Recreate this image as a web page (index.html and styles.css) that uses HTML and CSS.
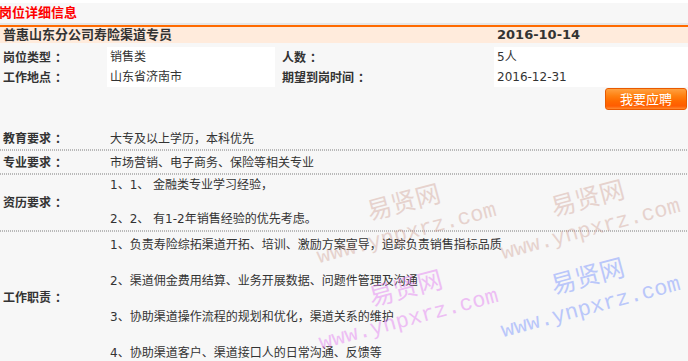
FILE: index.html
```html
<!DOCTYPE html>
<html lang="zh">
<head>
<meta charset="utf-8">
<title>岗位详细信息</title>
<link rel="stylesheet" href="styles.css">
</head>
<body>
<div class="page">
  <div class="title">岗位详细信息</div>
  <div class="info">
    <div class="head-name">普惠山东分公司寿险渠道专员</div>
    <div class="head-date">2016-10-14</div>
    <div class="lab">岗位类型<span class="colon">：</span></div>
    <div class="val">销售类</div>
    <div class="lab lab2">人数<span class="colon">：</span></div>
    <div class="val">5人</div>
    <div class="lab">工作地点<span class="colon">：</span></div>
    <div class="val">山东省济南市</div>
    <div class="lab lab2">期望到岗时间<span class="colon">：</span></div>
    <div class="val">2016-12-31</div>
  </div>
  <div class="actions"><button class="apply" type="button">我要应聘</button></div>
  <div class="details">
    <div class="row">
      <div class="dlab">教育要求<span class="colon">：</span></div>
      <div class="dval">大专及以上学历，本科优先</div>
    </div>
    <div class="row">
      <div class="dlab">专业要求<span class="colon">：</span></div>
      <div class="dval">市场营销、电子商务、保险等相关专业</div>
    </div>
    <div class="row">
      <div class="dlab">资历要求<span class="colon">：</span></div>
      <div class="dval dval-exp">1、1、 金融类专业学习经验，<br><br>2、2、 有1-2年销售经验的优先考虑。</div>
    </div>
    <div class="row">
      <div class="dlab">工作职责<span class="colon">：</span></div>
      <div class="dval dval-duty">1、负责寿险综拓渠道开拓、培训、激励方案宣导，追踪负责销售指标品质<br><br>2、渠道佣金费用结算、业务开展数据、问题件管理及沟通<br><br>3、协助渠道操作流程的规划和优化，渠道关系的维护<br><br>4、协助渠道客户、渠道接口人的日常沟通、反馈等</div>
    </div>
  </div>

  <div class="wm wm-brown wm-a"><div class="wm-cn">易贤网</div><div class="wm-en">www.ynpxrz.com</div></div>
  <div class="wm wm-brown wm-b"><div class="wm-cn">易贤网</div><div class="wm-en">www.ynpxrz.com</div></div>
  <div class="wm wm-pink wm-c"><div class="wm-cn">易贤网</div><div class="wm-en">www.ynpxrz.com</div></div>
  <div class="wm wm-blue wm-d"><div class="wm-cn">易贤网</div><div class="wm-en">www.ynpxrz.com</div></div>
</div>
</body>
</html>
```

FILE: styles.css
```css
html, body {
  margin: 0;
  padding: 0;
  background: #ffffff;
}

body {
  font-family: "DejaVu Sans", "Noto Sans CJK SC", sans-serif;
  font-size: 12px;
  color: #333333;
  overflow: hidden;
}

.page {
  position: relative;
  margin-top: 3px;
  background: #f7f7f7;
  min-height: 358px;
  overflow: hidden;
}

.title {
  height: 20px;
  line-height: 20px;
  margin-left: -1px;
  font-size: 13px;
  font-weight: bold;
  color: #ff0000;
  border-bottom: 2px solid #e6e6e6;
}

.colon {
  font-family: "Noto Sans CJK SC", sans-serif;
  padding-left: 4px;
}

.info {
  display: grid;
  grid-template-columns: 107px 168px 219px 1fr;
  grid-auto-rows: 20px;
  border-top: 2px solid #ff6a00;
}

.head-name,
.head-date {
  height: 16px;
  line-height: 16px;
  background: #ffebdc;
  font-size: 13px;
  font-weight: bold;
  color: #333333;
}

.head-name {
  grid-column: 1 / 4;
  padding-left: 3px;
}

.head-date {
  grid-column: 4;
  padding-left: 3px;
}

.lab {
  line-height: 20px;
  padding-left: 3px;
  font-weight: bold;
  color: #333333;
}

.lab2 {
  padding-left: 7px;
}

.val {
  line-height: 20px;
  padding-left: 3px;
  background: #ffffff;
  color: #333333;
}

.actions {
  display: flex;
  justify-content: flex-end;
  padding: 1px 1px 0 0;
  height: 40px;
  box-sizing: border-box;
}

.apply {
  width: 82px;
  height: 22px;
  padding: 0;
  border: 1px solid #e85a00;
  border-radius: 3px;
  background: linear-gradient(#ffa040 0%, #ff8010 35%, #ff6a00 60%, #ff5c00 85%, #ff8a30 100%);
  color: #ffffff;
  font-family: "Noto Sans CJK SC", sans-serif;
  font-size: 13px;
  line-height: 20px;
  cursor: pointer;
}

.details {
  display: flex;
  flex-direction: column;
}

.row {
  display: flex;
  border-bottom: 2px solid transparent;
  background: repeating-linear-gradient(90deg, #b9b9b9 0 1px, transparent 1px 2px) left bottom / 100% 2px no-repeat border-box;
}

.dlab {
  width: 104px;
  flex: none;
  padding-left: 3px;
  align-self: center;
  font-weight: bold;
  line-height: 16px;
  color: #333333;
}

.dval {
  padding: 4px 0 2px 3px;
  line-height: 16px;
  color: #333333;
}

.dval-exp {
  padding: 2px 0 2px 3px;
  line-height: 17px;
}

.dval-duty {
  padding: 4px 0 0 3px;
  line-height: 18px;
}

/* watermarks overlaying the content */
.wm {
  position: absolute;
  transform: rotate(-15deg);
  transform-origin: 0 0;
  white-space: nowrap;
  pointer-events: none;
}

.wm-cn {
  padding-left: 60px;
  font-family: "Noto Sans CJK SC", serif;
  font-size: 25px;
  line-height: 30px;
}

.wm-en {
  margin-top: 4px;
  font-family: "Liberation Mono", monospace;
  font-size: 22px;
  line-height: 30px;
}

.wm-brown {
  color: #c08070;
  opacity: 0.3;
}

.wm-pink {
  color: #e070f0;
  opacity: 0.42;
}

.wm-blue {
  color: #6080ff;
  opacity: 0.4;
}

.wm-a { left: 305px; top: 208px; }
.wm-b { left: 489px; top: 204px; }
.wm-c { left: 307px; top: 294px; }
.wm-d { left: 489px; top: 282px; }
```
